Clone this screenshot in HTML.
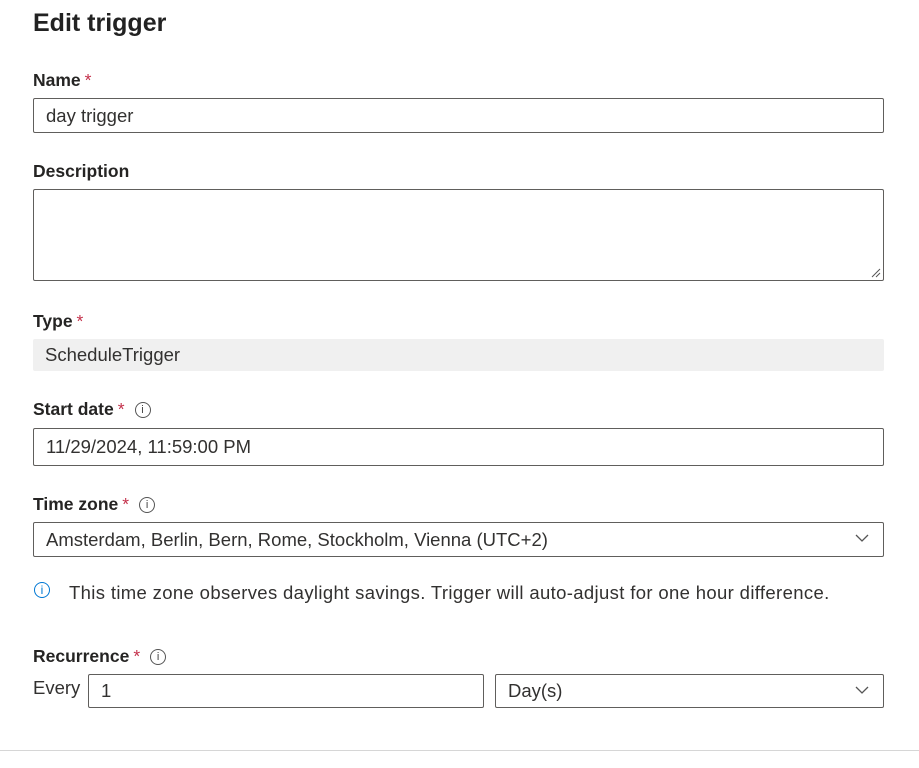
<!DOCTYPE html>
<html><head><style>
body{margin:0;width:919px;height:768px;background:#fff;font-family:"Liberation Sans",sans-serif;color:#323130;position:relative;overflow:hidden}
.a{position:absolute}
.t{left:33px;top:9px;font-size:25px;font-weight:600;color:#222}
.l{font-size:17.5px;font-weight:bold;color:#252423;left:33px}
.s{color:#c4314b;font-weight:normal;margin-left:4px}
.box{border:1px solid #605e5c;border-radius:2px;box-sizing:border-box;font-size:18.5px;padding-left:12px;display:flex;align-items:center;background:#fff}
.i{display:inline-block;width:14px;height:14px;border:1px solid #555;border-radius:50%;font-size:11px;text-align:center;line-height:14px;font-weight:normal;vertical-align:2px;margin-left:10px;color:#444}
.chev{position:absolute;right:14px;top:11px}
</style></head><body>
<div class="a t">Edit trigger</div>
<div class="a l" style="top:70px">Name<span class="s">*</span></div>
<div class="a box" style="left:33px;top:98px;width:851px;height:35px">day trigger</div>
<div class="a l" style="top:161px">Description</div>
<div class="a box" style="left:33px;top:189px;width:851px;height:92px">
<svg class="a" style="right:2px;bottom:2px" width="10" height="10"><path d="M9 1L1 9M9 5L5 9" stroke="#555" stroke-width="1"/></svg></div>
<div class="a l" style="top:311px">Type<span class="s">*</span></div>
<div class="a box" style="left:33px;top:339px;width:851px;height:32px;border:none;background:#f0f0f0">ScheduleTrigger</div>
<div class="a l" style="top:399px">Start date<span class="s">*</span><span class="i">i</span></div>
<div class="a box" style="left:33px;top:428px;width:851px;height:38px">11/29/2024, 11:59:00 PM</div>
<div class="a l" style="top:494px">Time zone<span class="s">*</span><span class="i">i</span></div>
<div class="a box" style="left:33px;top:522px;width:851px;height:35px">Amsterdam, Berlin, Bern, Rome, Stockholm, Vienna (UTC+2)
<svg class="chev" width="14" height="9"><path d="M1 1l6 6 6-6" fill="none" stroke="#555" stroke-width="1.3"/></svg></div>
<div class="a" style="left:34px;top:582px;width:16px;height:16px;border:1.5px solid #0078d4;border-radius:50%;color:#0078d4;font-size:12px;text-align:center;line-height:14px;box-sizing:border-box">i</div>
<div class="a" style="left:69px;top:582px;font-size:18.5px;letter-spacing:0.35px">This time zone observes daylight savings. Trigger will auto-adjust for one hour difference.</div>
<div class="a l" style="top:646px">Recurrence<span class="s">*</span><span class="i">i</span></div>
<div class="a" style="left:33px;top:677px;font-size:18.5px">Every</div>
<div class="a box" style="left:88px;top:674px;width:396px;height:34px">1</div>
<div class="a box" style="left:495px;top:674px;width:389px;height:34px">Day(s)
<svg class="chev" width="14" height="9"><path d="M1 1l6 6 6-6" fill="none" stroke="#555" stroke-width="1.3"/></svg></div>
<div class="a" style="left:0;top:750px;width:919px;height:1px;background:#d6d6d6"></div>
</body></html>
